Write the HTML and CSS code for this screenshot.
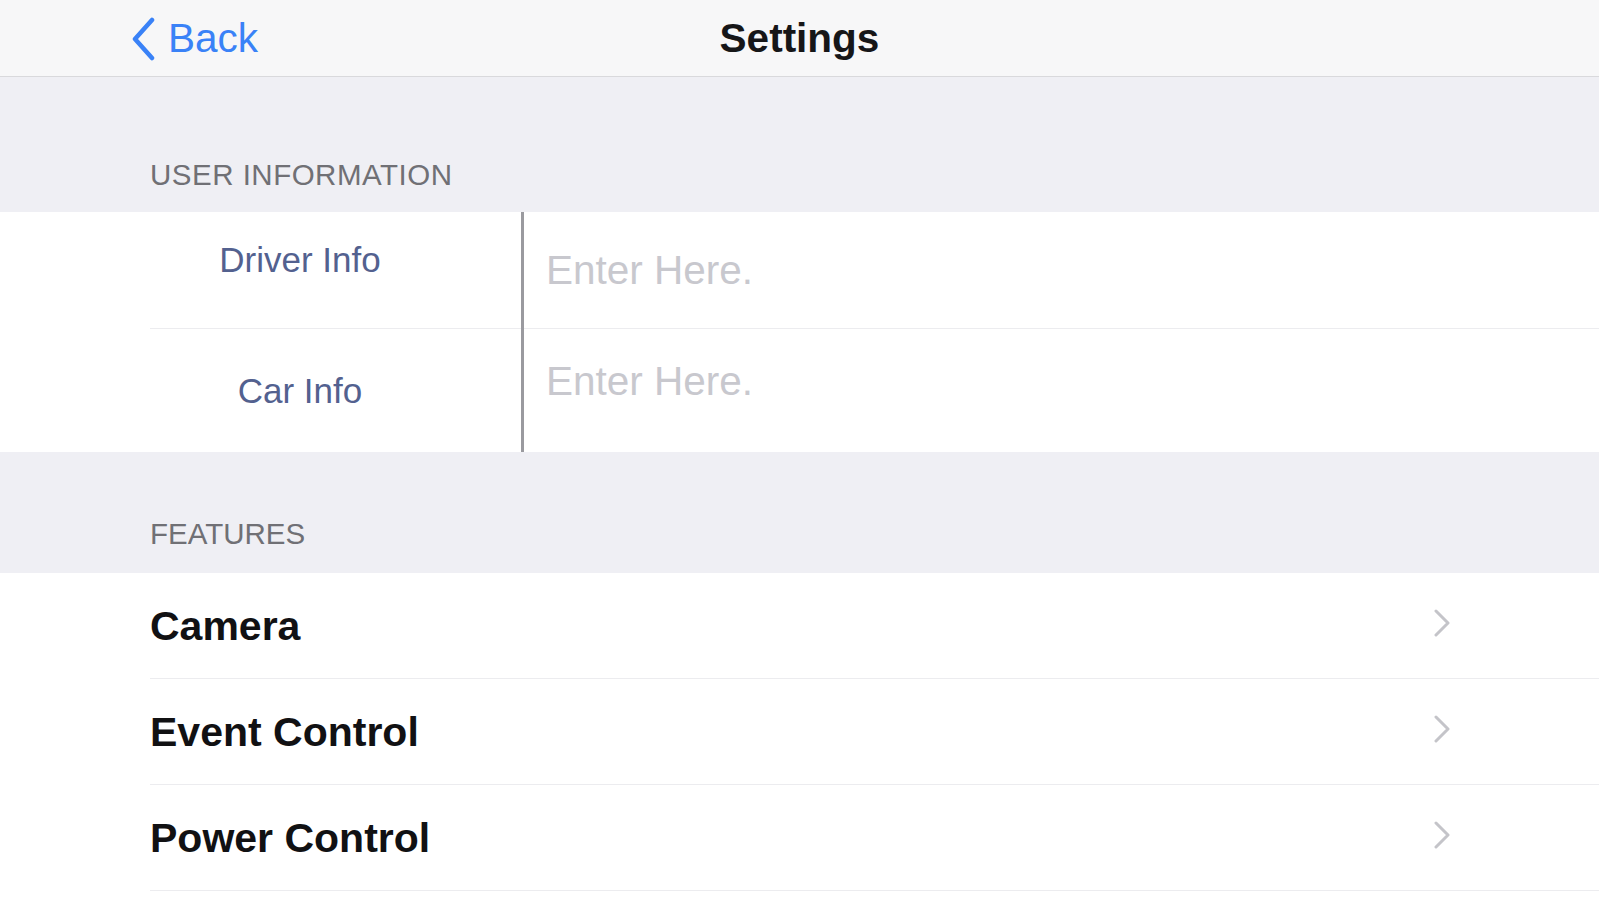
FILE: index.html
```html
<!DOCTYPE html>
<html lang="en">
<head>
<meta charset="utf-8">
<title>Settings</title>
<link rel="stylesheet" href="styles.css">
</head>
<body>
<div class="screen">
  <header class="nav">
    <div class="nav-left">
      <a class="back" href="#">
        <svg class="back-chevron" width="26" height="44" viewBox="0 0 26 44" aria-hidden="true">
          <path d="M22 3 L5 22 L22 41" fill="none" stroke="#3a82f7" stroke-width="4.5" stroke-linecap="round" stroke-linejoin="round"/>
        </svg>
        <span class="back-label">Back</span>
      </a>
    </div>
    <h1 class="nav-title">Settings</h1>
    <div class="nav-right"></div>
  </header>

  <div class="section-header first">USER INFORMATION</div>
  <div class="form">
    <div class="form-label row1">Driver Info</div>
    <div class="form-input row1">Enter Here.</div>
    <div class="form-divider"></div>
    <div class="form-label row2">Car Info</div>
    <div class="form-input row2">Enter Here.</div>
    <div class="form-vline"></div>
  </div>

  <div class="section-header second">FEATURES</div>
  <ul class="list">
    <li class="list-row"><span class="list-text">Camera</span>
      <svg class="chev" width="18" height="28" viewBox="0 0 18 28" aria-hidden="true"><path d="M3 2 L15 14 L3 26" fill="none" stroke="#c4c4c9" stroke-width="3" stroke-linecap="round" stroke-linejoin="round"/></svg>
    </li>
    <li class="list-row"><span class="list-text">Event Control</span>
      <svg class="chev" width="18" height="28" viewBox="0 0 18 28" aria-hidden="true"><path d="M3 2 L15 14 L3 26" fill="none" stroke="#c4c4c9" stroke-width="3" stroke-linecap="round" stroke-linejoin="round"/></svg>
    </li>
    <li class="list-row"><span class="list-text">Power Control</span>
      <svg class="chev" width="18" height="28" viewBox="0 0 18 28" aria-hidden="true"><path d="M3 2 L15 14 L3 26" fill="none" stroke="#c4c4c9" stroke-width="3" stroke-linecap="round" stroke-linejoin="round"/></svg>
    </li>
  </ul>
  <div class="list-tail"></div>
</div>
</body>
</html>
```

FILE: styles.css
```css
* { box-sizing: border-box; }

html, body {
  margin: 0;
  padding: 0;
}

body {
  width: 1599px;
  height: 900px;
  overflow: hidden;
  background: #efeff4;
  font-family: "Liberation Sans", Arial, sans-serif;
}

.screen {
  display: flex;
  flex-direction: column;
  height: 900px;
}

/* Navigation bar */
.nav {
  height: 77px;
  flex: none;
  background: #f7f7f8;
  border-bottom: 1px solid #d9d9dc;
  display: grid;
  grid-template-columns: 1fr auto 1fr;
  align-items: center;
}

.nav-left {
  padding-left: 130px;
  display: flex;
  align-items: center;
}

.back {
  display: flex;
  align-items: center;
  gap: 12px;
  text-decoration: none;
  color: #3a82f7;
}

.back-chevron {
  display: block;
  margin-top: 1px;
}

.back-label {
  font-size: 40.5px;
  line-height: 46px;
}

.nav-title {
  margin: 0;
  font-size: 40.5px;
  line-height: 46px;
  font-weight: 700;
  color: #161618;
}

/* Section headers */
.section-header {
  flex: none;
  display: flex;
  align-items: flex-end;
  padding-left: 150px;
  font-size: 29.5px;
  letter-spacing: 0.5px;
  line-height: 34px;
  color: #707075;
}

.section-header.first {
  height: 135px;
  padding-bottom: 20px;
}

.section-header.second {
  height: 121px;
  padding-bottom: 22px;
  letter-spacing: 0;
}

/* Form */
.form {
  flex: none;
  background: #ffffff;
  padding-left: 150px;
  display: grid;
  grid-template-columns: 371px 3px 1fr;
  grid-template-rows: 116px 1px 123px;
}

.form-label {
  grid-column: 1;
  width: 300px;
  text-align: center;
  font-size: 35px;
  line-height: 40px;
  color: #53618f;
}

.form-label.row1 { grid-row: 1; padding-top: 28px; }
.form-label.row2 { grid-row: 3; padding-top: 42px; }

.form-input {
  grid-column: 3;
  padding-left: 22px;
  font-size: 40.5px;
  line-height: 46px;
  color: #c8c8ce;
}

.form-input.row1 { grid-row: 1; padding-top: 35px; }
.form-input.row2 { grid-row: 3; padding-top: 29px; }

.form-divider {
  grid-column: 1 / -1;
  grid-row: 2;
  background: #ececef;
}

.form-vline {
  grid-column: 2;
  grid-row: 1 / -1;
  background: #9a9a9f;
  z-index: 1;
}

/* Features list */
.list {
  flex: none;
  list-style: none;
  margin: 0;
  padding: 0 0 0 150px;
  background: #ffffff;
}

.list-row {
  height: 106px;
  border-bottom: 1px solid #ececef;
  display: flex;
  align-items: center;
  justify-content: space-between;
  padding-right: 148px;
}

.list-text {
  font-size: 41px;
  line-height: 46px;
  font-weight: 700;
  color: #111113;
}

.chev {
  display: block;
  margin-top: -6px;
}

.list-tail {
  flex: 1;
  background: #ffffff;
}
```
